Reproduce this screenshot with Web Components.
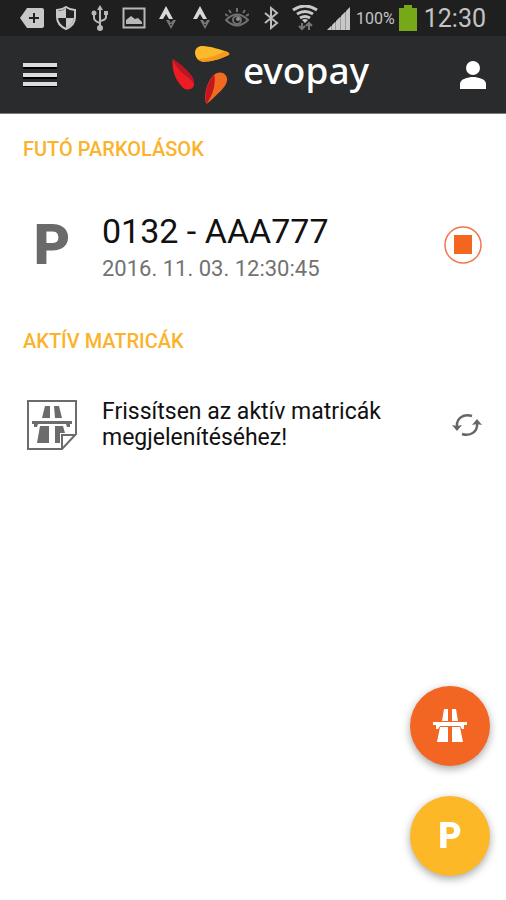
<!DOCTYPE html>
<html lang="hu">
<head>
<meta charset="utf-8">
<meta name="viewport" content="width=device-width, initial-scale=1">
<title>evopay</title>
<style>
  body { margin: 0; background: #fff; color: #111; font-family: Roboto, "Noto Sans", sans-serif; }
</style>
</head>
<body>
<evo-app></evo-app>
<script>
const define = (name, html, setup) => {
  const tpl = document.createElement('template');
  tpl.innerHTML = html;
  customElements.define(name, class extends HTMLElement {
    constructor() {
      super();
      this.attachShadow({ mode: 'open' }).append(tpl.content.cloneNode(true));
    }
    connectedCallback() { if (setup) setup(this, this.shadowRoot); }
  });
};

/* name: [width, height, content] */
const icons = {
  back: [24, 22, '<path fill="#c8c8c8" d="M7 1h15q2 0 2 2v16q0 2-2 2H7L0 11z"/><path stroke="#222" stroke-width="2" d="M14 6v10M9 11h10"/>'],
  shield: [22, 24, '<path fill="#222" stroke="#c8c8c8" stroke-width="2" d="M11 1Q15 4 20 4V11Q20 19 11 23Q2 19 2 11V4Q7 4 11 1z"/><path fill="#c8c8c8" d="M11 2v10H3V5q5 0 8-3zM11 12h8q-1 7-8 10z"/>'],
  usb: [18, 26, '<g fill="none" stroke="#b8b8b8" stroke-width="2"><path d="M9 3v20M3 8v5q0 3 6 5M15 8v4q0 3-6 4"/></g><g fill="#b8b8b8"><path d="M9 0l3 5H6zM13 6h4v4h-4z"/><circle cx="3" cy="8" r="2.500"/><circle cx="9" cy="23" r="3"/></g>'],
  image: [24, 22, '<rect x="1.500" y="1.500" width="21" height="19" fill="none" stroke="#b8b8b8" stroke-width="2"/><path fill="#b8b8b8" d="M4 17v-4l5-4 4 3 3-1 4 4v2z"/>'],
  strava: [18, 24, '<path fill="#d8d8d8" d="M7 0l7 13h-4L7 8l-3 5H0z"/><path fill="#777" fill-rule="evenodd" d="M7 14h3l2 3 2-3h3l-5 9zM11 18l1 2 1-2z"/>'],
  eye: [24, 20, '<g fill="none" stroke="#707070" stroke-width="2"><path d="M1 12Q12 1 23 12Q12 23 1 12zM12 4V0M6 5L4 2M18 5l2-3M3 8L0 6M21 8l3-2"/><circle cx="12" cy="12" r="4"/></g><circle cx="13" cy="11" r="2" fill="#909090"/>'],
  bluetooth: [16, 24, '<path fill="none" stroke="#bcbcbc" stroke-width="2" d="M2 7l12 10-6 5V2l6 5L2 17"/>'],
  wifi: [26, 26, '<g fill="none" stroke="#c8c8c8" stroke-width="3"><path d="M1 5Q13-3 25 5M5 9Q13 4 21 9M8 13q5-3 10 0"/></g><path fill="#c8c8c8" d="M10 15q3-2 6 0l-3 3z"/><path fill="none" stroke="#777" stroke-width="2" d="M10 18v6M7 21l3 3 3-3M17 25v-7M14 21l3-3 3 3"/>'],
  signal: [24, 24, '<path fill="#c8c8c8" d="M0 24h4v-4l-4 4zM5 24h3v-8l-3 3zM9 24h4V11l-4 4zM14 24h4V6l-4 4zM19 24h4V1l-4 4z"/><path fill="#999" d="M4 20h1v4H4zM8 16h1v8H8zM13 11h1v13h-1zM18 6h1v18h-1z"/>'],
  battery: [18, 26, '<path fill="#76a818" d="M5 0h8v3h5v23H0V3h5z"/>'],
  menu: [34, 24, '<path fill="#000" d="M0 4h35v2H0zM0 14h35v2H0zM0 23h35v1H0z"/><path fill="#dcdcdf" d="M0 0h34v4H0zM0 10h34v4H0zM0 19h34v4H0z"/>'],
  user: [26, 28, '<circle cx="13" cy="7" r="7" fill="#fff"/><path fill="#fff" d="M0 28v-5c0-5 8-7 13-7s13 2 13 7v5z"/>'],
  petals: [60, 60, `
    <g transform="scale(.3333) translate(-33 -27)">
    <path fill="#fdb92c" d="M105 50C105 38 114 30 128 30C152 31 180 40 203 48Q210 53 206 57C185 68 156 77 130 77C114 76 106 64 105 50z"/>
    <path fill="#f6991d" d="M206 57C185 68 156 77 130 77Q119 76 113 69C146 69 170 58 194 46Q214 51 206 57z"/>
    <path fill="#ed1c24" d="M38 69C35 100 45 130 66 152C76 165 98 163 102 148C105 130 94 118 82 105C68 91 52 78 38 69z"/>
    <path fill="#b91523" d="M38 69C52 78 68 91 82 105C95 119 104 131 102 145C94 128 78 121 66 110C54 99 45 86 38 69z"/>
    <path fill="#f26a21" d="M139 204C130 180 140 140 160 118C173 104 196 107 201 125C204 140 192 154 181 166C165 182 152 196 139 204z"/>
    <path fill="#c4161c" d="M139 204C130 180 140 140 163 115C168 140 160 178 139 204z"/>
    </g>`],
  stop: [38, 38, '<circle cx="19" cy="19" r="18" fill="none" stroke="#f4744a" stroke-width="1.500"/><path fill="#f4651f" d="M10 9h18v19H10z"/>'],
  refresh: [30, 24, '<g fill="none" stroke="#666" stroke-width="2.500"><path d="M5 14C4 6 11 0 20 3M25 10C26 18 19 24 10 21"/></g><path fill="#666" d="M0 12l5 1 5-1-5 6zM20 12l5-1 5 1-5-6z"/>'],
  sticker: [50, 50, '<path fill="none" stroke="#6c6c6c" stroke-width="2" d="M1 1h48v33L35 49H1zM35 49V35h14"/><g fill="#6c6c6c"><path d="M18 6h5v12h-8zM27 6h5l3 12h-7zM5 21h40v3h-2v3h-3l-1-3H11l-1 3H7v-3H5zM13 26h9v17H10zM28 26h8l2 7h-5v10h-5z"/></g>'],
  road: [34, 34, '<path fill="#fff" d="M11 0h4v12H9zM19 0h4l2 12h-6zM0 13h34v3h-3v4h-2l-2-3H7l-2 3H3v-4H0zM7 18h8v15H4zM19 18h8l3 15H19z"/>']
};

define('evo-icon', '<style>:host{display:block;flex:none}svg{display:block}</style><div></div>', (el, root) => {
  const [w, h, body] = icons[el.getAttribute('name')];
  root.querySelector('div').innerHTML =
    `<svg width="${w}" height="${h}" viewBox="0 0 ${w} ${h}" fill="none" aria-hidden="true">${body}</svg>`;
});

define('status-bar', `
<style>
  :host { display: flex; justify-content: space-between; align-items: center; height: 36px;
          padding: 0 20px 0 15px; background: #1f1f1f; color: #c4c4c4; }
  div { display: flex; align-items: center; }
  .cells evo-icon { width: 34px; display: flex; justify-content: center; }
  .level { font-size: 16px; }
  .power { gap: 4px; }
  time { font-size: 25px; margin-left: 3px; }
</style>
<div class="cells">
  <evo-icon name="back"></evo-icon><evo-icon name="shield"></evo-icon><evo-icon name="usb"></evo-icon>
  <evo-icon name="image"></evo-icon><evo-icon name="strava"></evo-icon><evo-icon name="strava"></evo-icon>
</div>
<div class="cells">
  <evo-icon name="eye"></evo-icon><evo-icon name="bluetooth"></evo-icon><evo-icon name="wifi"></evo-icon>
  <evo-icon name="signal"></evo-icon>
</div>
<div class="power">
  <span class="level">100%</span><evo-icon name="battery"></evo-icon><time>12:30</time>
</div>`);

define('app-bar', `
<style>
  :host { display: flex; justify-content: space-between; align-items: center; height: 78px;
          background: #292b2c; border-bottom: 1px solid #77797a; box-sizing: border-box; }
  button { border: 0; background: none; margin: 0; height: 76px; display: flex; align-items: center; }
  .menu { padding: 0 23px; }
  .user { padding: 0 20px 0 0; }
  .brand { display: flex; align-items: center; gap: 12px; color: #fff; text-decoration: none;
           font: 500 37px/60px "Noto Sans", "Open Sans", sans-serif; }
  .brand span { padding-bottom: 10px; }
</style>
<button class="menu" aria-label="Menü"><evo-icon name="menu"></evo-icon></button>
<a class="brand" href="#"><evo-icon name="petals"></evo-icon><span>evopay</span></a>
<button class="user" aria-label="Profil"><evo-icon name="user"></evo-icon></button>`);

define('list-section', `
<style>
  :host { display: block; }
  h2 { margin: 0; padding: 0 23px; font-size: 20px; line-height: 24px; font-weight: 500; color: #fbb32b; }
</style>
<h2><slot name="heading"></slot></h2><slot></slot>`);

define('list-row', `
<style>
  :host { display: grid; grid-template-columns: 56px 1fr auto; column-gap: 22px; align-items: center;
          padding: 46px 24px; }
  .lead { display: flex; justify-content: center; }
  ::slotted(button) { border: 0; padding: 0; margin: 0; background: none; display: block; }
</style>
<div class="lead"><slot name="lead"></slot></div><div><slot></slot></div><slot name="action"></slot>`);

define('parking-mark', `
<style>
  :host { display: block; font: 900 var(--mark-size, 56px)/1 Roboto, sans-serif; color: var(--mark-color, #6a6a6a); }
</style>P`);

define('float-button', `
<style>
  :host { display: block; }
  button { width: 80px; height: 80px; border: 0; border-radius: 50%; padding: 0; display: flex;
           align-items: center; justify-content: center; background: var(--fab);
           box-shadow: 0 3px 8px rgba(0,0,0,.35); }
</style>
<button><slot></slot></button>`, (el, root) => root.querySelector('button').setAttribute('aria-label', el.getAttribute('label')));

define('evo-app', `
<style>
  :host { display: block; min-height: 100vh; }
  main { padding-top: 23px; }
  .plate { margin: 0; font-size: 34px; line-height: 48px; }
  .date { margin: 0; font-size: 22px; line-height: 28px; color: #727272; }
  .hint { margin: 0; font-size: 23px; line-height: 26px; max-width: 300px; }
  nav { position: fixed; right: 16px; bottom: 24px; display: grid; gap: 30px; }
  .road { --fab: #f26522; }
  .park { --fab: #fdb827; --mark-size: 36px; --mark-color: #fff; }
</style>
<header><status-bar></status-bar><app-bar></app-bar></header>
<main>
  <list-section>
    <span slot="heading">FUTÓ PARKOLÁSOK</span>
    <list-row>
      <parking-mark slot="lead"></parking-mark>
      <div>
        <p class="plate">0132 - AAA777</p>
        <p class="date">2016. 11. 03. 12:30:45</p>
      </div>
      <button slot="action" aria-label="Parkolás leállítása"><evo-icon name="stop"></evo-icon></button>
    </list-row>
  </list-section>
  <list-section>
    <span slot="heading">AKTÍV MATRICÁK</span>
    <list-row>
      <evo-icon slot="lead" name="sticker"></evo-icon>
      <p class="hint">Frissítsen az aktív matricák megjelenítéséhez!</p>
      <button slot="action" aria-label="Frissítés"><evo-icon name="refresh"></evo-icon></button>
    </list-row>
  </list-section>
</main>
<nav>
  <float-button class="road" label="Matrica vásárlása"><evo-icon name="road"></evo-icon></float-button>
  <float-button class="park" label="Parkolás indítása"><parking-mark></parking-mark></float-button>
</nav>`);
</script>
</body>
</html>
